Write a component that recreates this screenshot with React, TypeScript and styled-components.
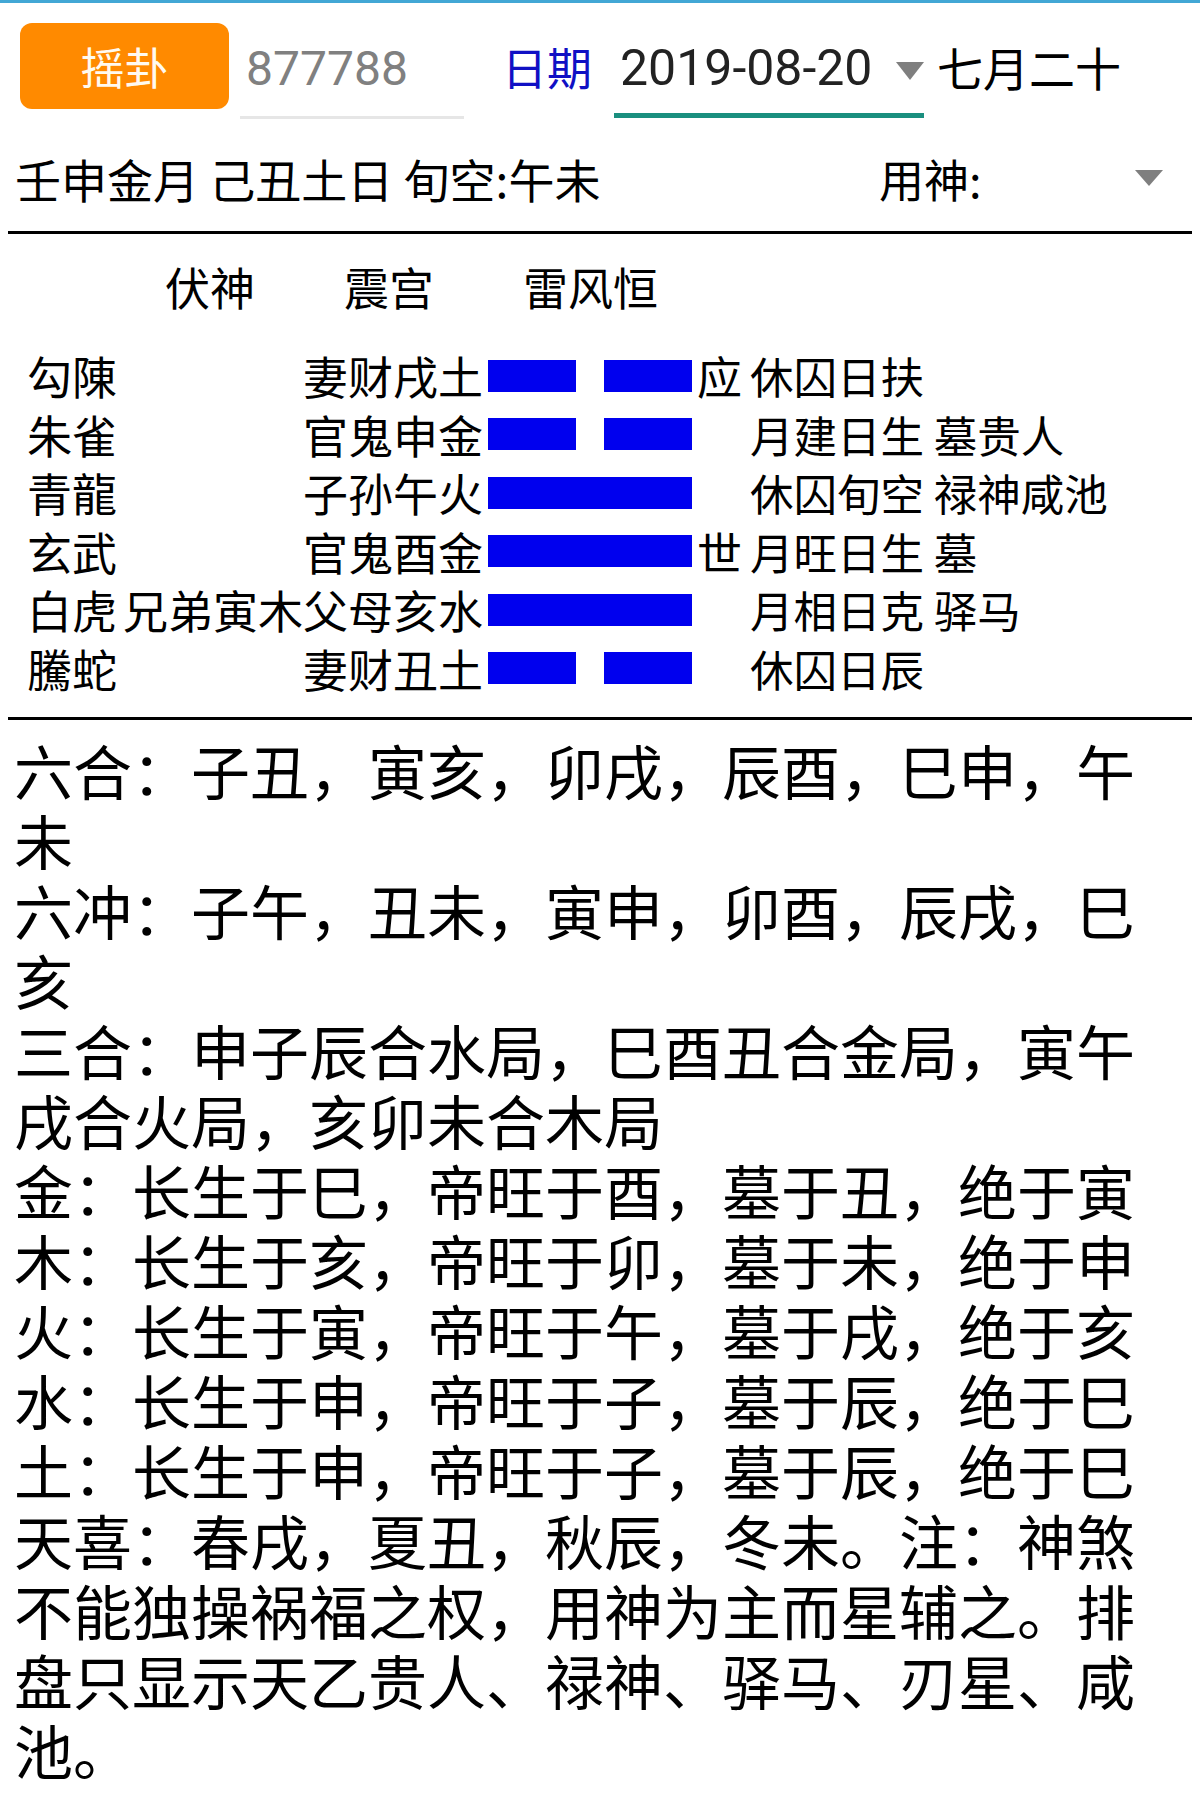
import React from "react";
import styled, { createGlobalStyle } from "styled-components";

const GlobalStyle = createGlobalStyle`
  html, body { margin: 0; padding: 0; background: #ffffff; }
  body { font-family: "Noto Sans CJK SC", "Noto Sans", sans-serif; color: #000; }
  * { box-sizing: border-box; }
`;

const Page = styled.div`
  width: 1200px;
  background: #fff;
`;

const TopStripe = styled.div`
  height: 3px;
  background: #42a7d5;
`;

const Toolbar = styled.div`
  display: flex;
  align-items: flex-start;
  margin-top: 20px;
  height: 96px;
`;

const ShakeButton = styled.button`
  margin-left: 20px;
  width: 209px;
  height: 86px;
  border: none;
  border-radius: 12px;
  background: #ff8a00;
  color: #fffaf0;
  font-family: "Noto Sans CJK SC", sans-serif;
  font-size: 44px;
  padding: 0;
  display: flex;
  align-items: center;
  justify-content: center;
`;

const NumberField = styled.div`
  margin-left: 11px;
  width: 224px;
  height: 96px;
  padding: 2px 0 5px 6px;
  border-bottom: 3px solid #e6e6e6;
  display: flex;
  align-items: center;
  font-family: Roboto, "Liberation Sans", sans-serif;
  font-size: 48px;
  color: #808080;
`;

const DateLabel = styled.div`
  margin-left: 38px;
  height: 86px;
  display: flex;
  align-items: center;
  font-size: 45px;
  color: #1010c4;
`;

const DateField = styled.div`
  margin-left: 22px;
  width: 310px;
  height: 95px;
  padding: 4px 0 5px 6px;
  border-bottom: 5px solid #1a8f7f;
  display: flex;
  align-items: center;
  justify-content: space-between;
  font-family: Roboto, "Liberation Sans", sans-serif;
  font-size: 50px;
  color: #222;
`;

const Caret = styled.span<{ $w: number; $h: number }>`
  display: inline-block;
  width: 0;
  height: 0;
  border-left: ${(p) => p.$w / 2}px solid transparent;
  border-right: ${(p) => p.$w / 2}px solid transparent;
  border-top: ${(p) => p.$h}px solid #7f7f7f;
`;

const DateCaret = styled(Caret)`
  margin-top: 6px;
`;

const LunarText = styled.div`
  margin-left: 13px;
  height: 86px;
  display: flex;
  align-items: center;
  font-size: 46px;
`;

const InfoRow = styled.div`
  display: flex;
  align-items: center;
  height: 112px;
  padding: 6px 37px 0 15px;
  font-size: 46px;
`;

const InfoText = styled.div`
  flex: 1;
  white-space: pre;
`;

const YongShen = styled.div`
  width: 284px;
  display: flex;
  align-items: center;
  justify-content: space-between;
  font-size: 45px;
`;

const Rule = styled.div`
  height: 3px;
  margin: 0 8px;
  background: #000;
`;

const GuaHeader = styled.div`
  display: flex;
  align-items: center;
  gap: 89px;
  height: 104px;
  padding-left: 165px;
  font-size: 45px;
`;

const YaoList = styled.div`
  margin-top: 5px;
  padding-bottom: 22px;
`;

const YaoRow = styled.div`
  display: grid;
  grid-template-columns: 96px 180px 180px 214px 53px 1fr;
  align-items: center;
  height: 58.6px;
  padding-left: 27px;
  font-size: 45px;
  white-space: nowrap;
`;

const Cell = styled.div<{ $right?: boolean }>`
  text-align: ${(p) => (p.$right ? "right" : "left")};
`;

const StateCell = styled.div`
  font-size: 43.5px;
`;

const YaoBar = styled.div<{ $yin: boolean }>`
  margin-left: 5px;
  width: 204px;
  height: 32px;
  display: flex;
  justify-content: space-between;
  &::before, &::after {
    content: "";
    display: block;
    height: 100%;
    background: #0000ee;
    width: ${(p) => (p.$yin ? "88px" : "102px")};
  }
`;

const Notes = styled.div`
  padding: 15px 14px 0 14px;
  font-size: 59px;
  line-height: 70px;
`;

const NoteLine = styled.p`
  margin: 0;
`;

type Yao = {
  god: string;
  fu: string;
  kin: string;
  yin: boolean;
  mark: string;
  note: string;
};

const yaos: Yao[] = [
  { god: "勾陳", fu: "", kin: "妻财戌土", yin: true, mark: "应", note: "休囚日扶" },
  { god: "朱雀", fu: "", kin: "官鬼申金", yin: true, mark: "", note: "月建日生 墓贵人" },
  { god: "青龍", fu: "", kin: "子孙午火", yin: false, mark: "", note: "休囚旬空 禄神咸池" },
  { god: "玄武", fu: "", kin: "官鬼酉金", yin: false, mark: "世", note: "月旺日生 墓" },
  { god: "白虎", fu: "兄弟寅木", kin: "父母亥水", yin: false, mark: "", note: "月相日克 驿马" },
  { god: "騰蛇", fu: "", kin: "妻财丑土", yin: true, mark: "", note: "休囚日辰" },
];

const notes = [
  "六合：子丑，寅亥，卯戌，辰酉，巳申，午未",
  "六冲：子午，丑未，寅申，卯酉，辰戌，巳亥",
  "三合：申子辰合水局，巳酉丑合金局，寅午戌合火局，亥卯未合木局",
  "金：长生于巳，帝旺于酉，墓于丑，绝于寅",
  "木：长生于亥，帝旺于卯，墓于未，绝于申",
  "火：长生于寅，帝旺于午，墓于戌，绝于亥",
  "水：长生于申，帝旺于子，墓于辰，绝于巳",
  "土：长生于申，帝旺于子，墓于辰，绝于巳",
  "天喜：春戌，夏丑，秋辰，冬未。注：神煞不能独操祸福之权，用神为主而星辅之。排盘只显示天乙贵人、禄神、驿马、刃星、咸池。",
];

export default function App() {
  return (
    <Page>
      <GlobalStyle />
      <TopStripe />
      <Toolbar>
        <ShakeButton>摇卦</ShakeButton>
        <NumberField>877788</NumberField>
        <DateLabel>日期</DateLabel>
        <DateField>
          <span>2019-08-20</span>
          <DateCaret $w={28} $h={18} />
        </DateField>
        <LunarText>七月二十</LunarText>
      </Toolbar>
      <InfoRow>
        <InfoText>壬申金月 己丑土日 旬空:午未</InfoText>
        <YongShen>
          <span>用神:</span>
          <Caret $w={29} $h={16} />
        </YongShen>
      </InfoRow>
      <Rule />
      <GuaHeader>
        <span>伏神</span>
        <span>震宫</span>
        <span>雷风恒</span>
      </GuaHeader>
      <YaoList>
        {yaos.map((y) => (
          <YaoRow key={y.god}>
            <Cell>{y.god}</Cell>
            <Cell>{y.fu}</Cell>
            <Cell $right>{y.kin}</Cell>
            <YaoBar $yin={y.yin} />
            <Cell>{y.mark}</Cell>
            <StateCell>{y.note}</StateCell>
          </YaoRow>
        ))}
      </YaoList>
      <Rule />
      <Notes>
        {notes.map((n) => (
          <NoteLine key={n}>{n}</NoteLine>
        ))}
      </Notes>
    </Page>
  );
}
